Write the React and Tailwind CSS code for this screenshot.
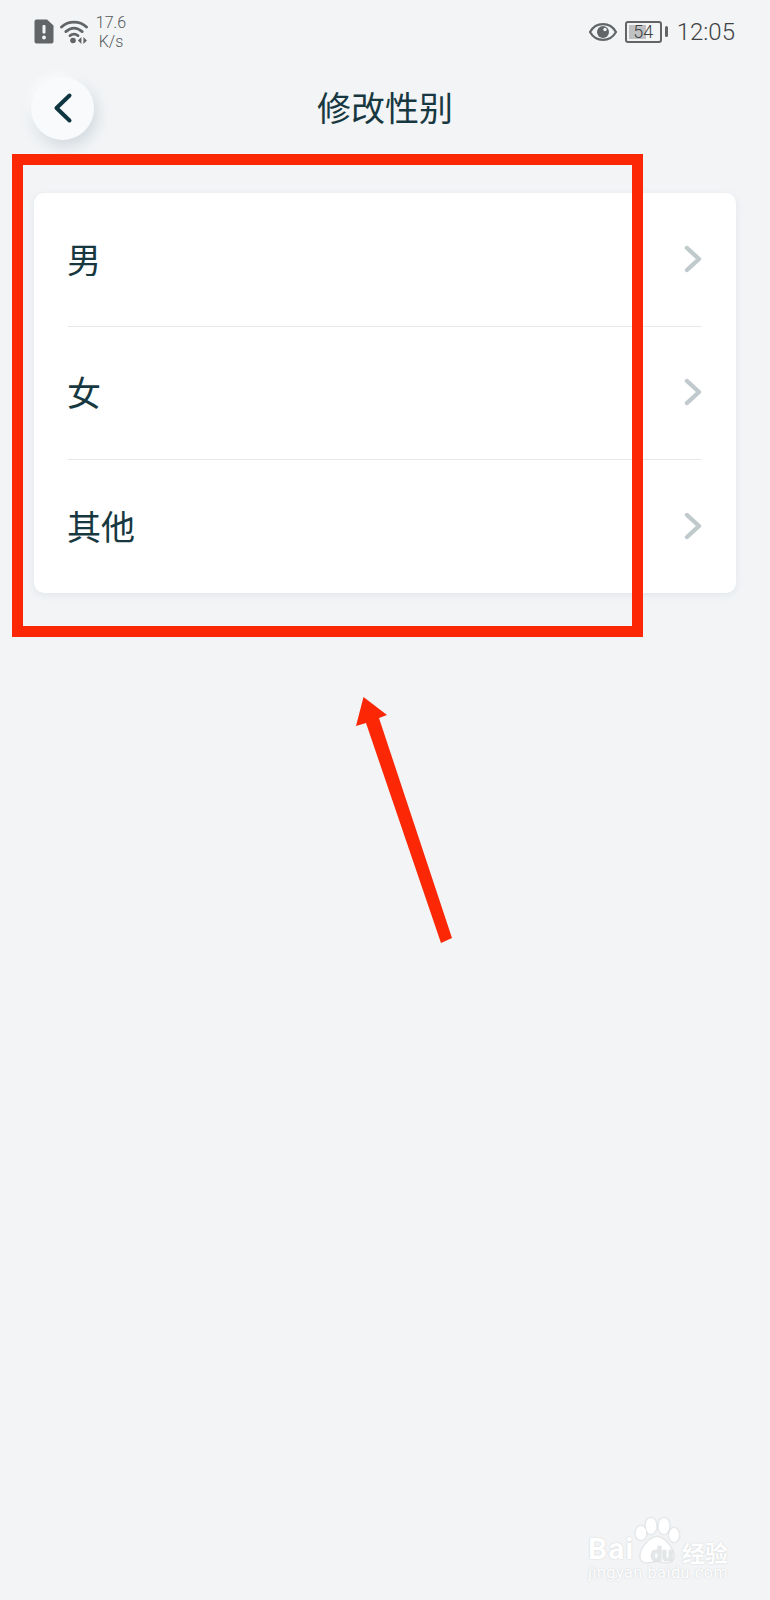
import React from "react";

const FONT = { fontFamily: '"Noto Sans CJK SC", sans-serif' };

const options = ["男", "女", "其他"];

// STATUS BAR
const SimIcon = () => (
  <svg width="20" height="25" viewBox="0 0 20 25">
    <path d="M3 0.5h10l6.5 6v16a2 2 0 0 1-2 2H2.5a2 2 0 0 1-2-2v-20a2 2 0 0 1 2-2z" fill="#626567" />
    <rect x="8.5" y="6" width="3" height="8.5" rx="1" fill="#f2f4f6" />
    <circle cx="10" cy="18.5" r="1.9" fill="#f2f4f6" />
  </svg>
);

const WifiIcon = () => (
  <svg width="28" height="24" viewBox="0 0 28 24" fill="none">
    <path d="M1.5 7C8.5 0.6 19.5 0.6 26.5 7" stroke="#626567" strokeWidth="2.8" strokeLinecap="round" />
    <path d="M5.8 11.6C11 7.2 17 7.2 22.2 11.6" stroke="#626567" strokeWidth="2.8" strokeLinecap="round" />
    <path d="M10 15.6C12.5 13.8 15.5 13.8 18 15.6" stroke="#626567" strokeWidth="2.8" strokeLinecap="round" />
    <circle cx="13" cy="20.5" r="2.8" fill="#626567" />
    <path d="M21.4 17v7l-3.5-3.5zM23.4 17v7l3.5-3.5z" fill="#626567" />
  </svg>
);

const EyeIcon = () => (
  <svg width="28" height="18" viewBox="0 0 28 18">
    <path d="M1 9C7 -1.5 21 -1.5 27 9C21 19.5 7 19.5 1 9z" fill="none" stroke="#626567" strokeWidth="2.2" />
    <circle cx="14" cy="9" r="6" fill="#626567" />
    <circle cx="16" cy="6.5" r="1.7" fill="#f2f4f6" />
  </svg>
);

const Battery = () => (
  <div className="flex items-center gap-[3px]">
    <div className="relative flex h-[22px] w-[37px] items-center justify-center overflow-hidden rounded-[3px] border-2 border-[#626567]">
      <div className="absolute inset-y-[2px] left-[2px] w-[17px] bg-[#bfc1c3]" />
      <span className="relative text-[18px] font-light leading-none text-[#3f4244]" style={{ fontFamily: "Roboto, sans-serif" }}>54</span>
    </div>
    <div className="h-[11px] w-[3px] rounded-sm bg-[#626567]" />
  </div>
);

const StatusBar = () => (
  <div className="flex h-[62px] items-center justify-between pl-[34px] pr-[35px] pt-[1px]" style={{ fontFamily: "Roboto, sans-serif" }}>
    <div className="flex items-center gap-[6px]">
      <SimIcon />
      <WifiIcon />
      <div className="flex w-[34px] flex-col items-center text-[16px] font-light leading-[19px] text-[#55585a]">
        <span>17.6</span>
        <span>K/s</span>
      </div>
    </div>
    <div className="flex items-center">
      <EyeIcon />
      <div className="ml-[8px]"><Battery /></div>
      <span className="ml-[9px] text-[24px] font-light leading-none text-[#3f4244]">12:05</span>
    </div>
  </div>
);

// HEADER
const Header = () => (
  <div className="relative mt-[15px] flex h-[63px] items-center justify-center">
    <button className="absolute left-[31px] top-0 flex h-[63px] w-[63px] items-center justify-center rounded-full bg-[#f8fafb] shadow-[3px_6px_14px_rgba(160,175,185,0.4),-3px_-3px_8px_rgba(255,255,255,0.9)]">
      <svg className="mb-[2px]" width="20" height="32" viewBox="0 0 20 32" fill="none">
        <path d="M16.5 3.5L3.5 16L16.5 28.5" stroke="#0f3540" strokeWidth="4" strokeLinecap="round" strokeLinejoin="round" />
      </svg>
    </button>
    <h1 className="mb-[4px] text-[34px] font-normal leading-none text-[#173840]">修改性别</h1>
  </div>
);

// OPTION ROW
const OptionRow = ({ label, last }) => (
  <div className={`flex items-center justify-between ${last ? "h-[133px]" : "h-[133px] border-b border-[#e6e9eb] first:h-[134px]"}`}>
    <span className="-ml-[1px] mb-[2px] text-[34px] leading-none text-[#173840]">{label}</span>
    <svg className="mb-[2px]" width="18" height="28" viewBox="0 0 18 28" fill="none">
      <path d="M3 3L15 14L3 25" stroke="#c0cacc" strokeWidth="4.4" strokeLinecap="round" strokeLinejoin="round" />
    </svg>
  </div>
);

// BAIDU WATERMARK
const Watermark = () => (
  <div className="absolute left-[588px] top-[1516px] w-[142px] text-white" style={{ fontFamily: "Roboto, sans-serif", textShadow: "0 0 1.5px #c5c8ca" }}>
    <svg className="absolute left-[44px] top-0" width="52" height="50" viewBox="0 0 52 50" style={{ filter: "drop-shadow(0 0 1px #c5c8ca)" }}>
      <ellipse cx="9" cy="17" rx="5.5" ry="7" fill="#fff" />
      <ellipse cx="19" cy="10" rx="5.5" ry="8" fill="#fff" />
      <ellipse cx="32" cy="10" rx="5.5" ry="8" fill="#fff" />
      <ellipse cx="42" cy="19" rx="5" ry="7" fill="#fff" />
      <path d="M25 21C33 21 44 36 41 43C38 49 31 45 25 45C19 45 12 49 9 43C6 36 17 21 25 21z" fill="#fff" />
    </svg>
    <div className="relative flex h-[49px] items-end pb-[1px]">
      <span className="w-[56px] text-[30px] font-bold leading-none tracking-[1px]">Bai</span>
      <span className="w-[36px] text-center text-[20px] font-bold leading-none text-[#e4e7e9]">du</span>
      <span className="ml-[2px] text-[23px] font-bold leading-none" style={FONT}>经验</span>
    </div>
    <div className="relative text-[16px] leading-none tracking-[0.6px]">jingyan.baidu.com</div>
  </div>
);

export default function App() {
  return (
    <div className="relative h-[1600px] w-[770px] overflow-hidden bg-[#f2f4f6]" style={FONT}>
      <StatusBar />
      <Header />

      <div className="mx-[34px] mt-[53px] rounded-[10px] bg-white px-[34px] shadow-[0_2px_6px_rgba(180,190,198,0.25)]">
        {options.map((label, i) => (
          <OptionRow key={label} label={label} last={i === options.length - 1} />
        ))}
      </div>

      {/* red annotation box + arrow drawn over the screenshot */}
      <div className="absolute left-[12px] top-[154px] h-[483px] w-[631px] border-[11px] border-[#fb2705]" />
      <svg className="absolute left-[340px] top-[680px]" width="130" height="270" viewBox="0 0 130 270">
        <polygon points="23.5,17 47,35 39,38 112,258 101,263 26,43 16,46" fill="#fb2705" />
      </svg>

      <Watermark />
    </div>
  );
}
